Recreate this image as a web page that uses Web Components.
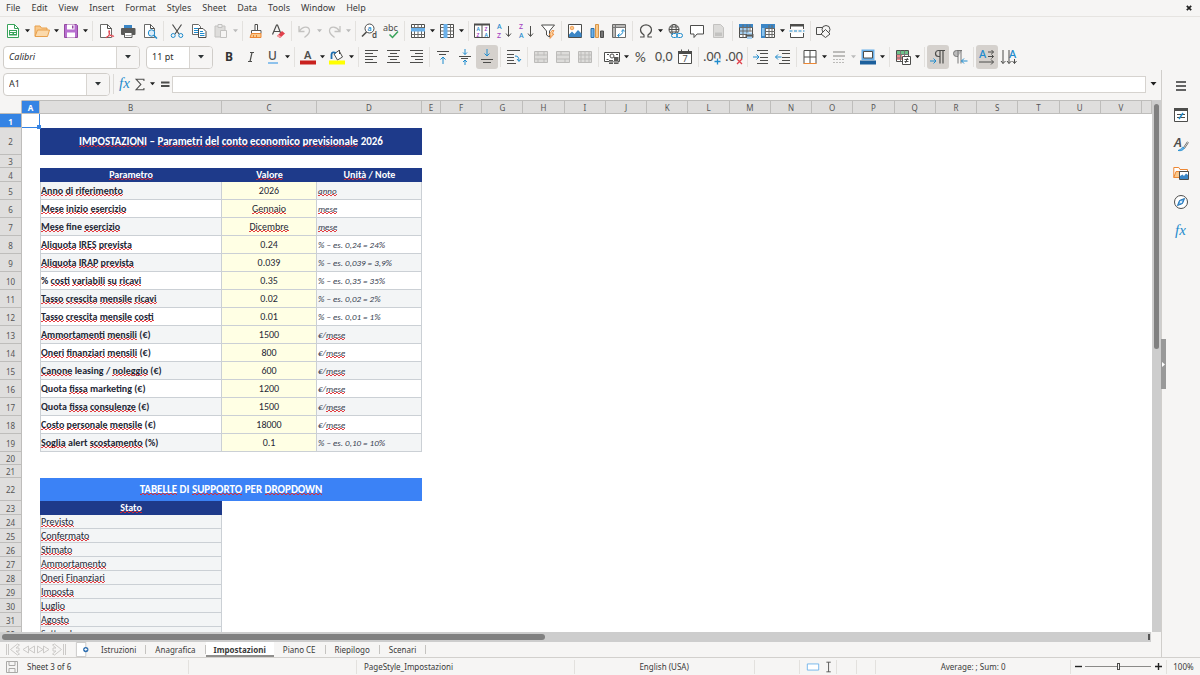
<!DOCTYPE html>
<html lang="en">
<head>
<meta charset="utf-8">
<title>Calc</title>
<style>
html,body{margin:0;height:100%}
body{font:9px/12px "Noto Sans",sans-serif;color:#3a3a3a;background:#f6f5f4;overflow:hidden}
</style>
</head>
<body>
<calc-window></calc-window>
<script>
const K='stroke="#4d4d4b" fill="none"', B='stroke="#1e8bcd" fill="none"', D='stroke="#c3c2c0" fill="none"';
const lines=(rows,c='#4d4d4b')=>rows.map(([x,y,w])=>`<path d="M${x} ${y}.5h${w}" stroke="${c}"/>`).join('');
const T=(x,y,s,t,c='#4d4d4b',x2='')=>`<text x="${x}" y="${y}" font-size="${s}" fill="${c}" ${x2}>${t}</text>`;
const table=(c,f='#fff')=>`<path d="M1.5 1.5h13v13h-13z" fill="${f}" stroke="${c}"/>`;
const merge=(v)=>`<path d="M1.5 2.5h13v11h-13z" fill="#dddcda" stroke="#bcbbb9"/><path d="M1.5 6h13M1.5 10h13M${v}" stroke="#bcbbb9" fill="none"/>`;
const ICONS={
new:`<path d="M2.5 1.5h7l4 4v9h-11z" fill="#fff" stroke="#38a35a"/><path d="M9.5 1.5v4h4" fill="none" stroke="#38a35a"/><path d="M4 7h8v5.5H4z" fill="#38a35a"/><path d="M5 8.5h6M5 10.5h2.5M9 10.5h2" stroke="#fff"/>`,
open:`<path d="M1 13V3h5l1.5 2H13v3" fill="#f9c98c" stroke="#e8a04c"/><path d="M1 13.5L3.5 7H15.5L13.5 13.5z" fill="#fbd9ab" stroke="#e8a04c"/>`,
save:`<path d="M1.5 1.5h12l1 1v12h-13z" fill="#b76fd0" stroke="#94499f"/><path d="M4 1.5h7.5v5H4z" fill="#fff"/><path d="M9 2.5h1.5v3H9z" fill="#94499f"/><path d="M4 9.5h8v5H4z" fill="#fff"/>`,
pdf:`<path d="M2.5 1.5h7l4 4v9h-11z" fill="#fff" stroke="#6a6a68"/><path d="M9.5 1.5v4h4" ${K}/><path d="M8 15c3-2 4-5 3.5-7-.5-1.5-1.5.5 0 3s3 3 4 2.5-1-1.800-4-.8-4 2-3.500 2.300z" fill="#fff" stroke="#e0404b"/>`,
print:`<path d="M4 2h8v4H4z" fill="#3b86c6"/><rect x="1" y="5" width="14.5" height="7" rx="1" fill="#5a5a58"/><path d="M4.5 9.5h7.5v5H4.5z" fill="#fff" stroke="#5a5a58"/><path d="M5.5 12.5h5.5" stroke="#aaa"/>`,
preview:`<path d="M2.5 1.5h6l4 4v9h-10z" fill="#fff" stroke="#6a6a68"/><path d="M8.5 1.5v4h4" ${K}/><circle cx="9.5" cy="10" r="3.2" fill="#dcecf8" stroke="#1e8bcd"/><path d="M12 12.5l3 3" stroke="#1e8bcd" stroke-width="1.5"/>`,
cut:`<path d="M3.5 1.5l6.5 9.5M12.5 1.5L6 11" ${K} stroke-width="1.2"/><circle cx="4.2" cy="12.5" r="2" ${B}/><circle cx="11.8" cy="12.5" r="2" ${B}/>`,
copy:`<path d="M1.5 1.5h6l2 2v8h-8z" fill="#fff" stroke="#6a6a68"/><path d="M3 5.5h5M3 7.5h5M3 9.5h4" ${B}/><path d="M7.5 5.5h4.5l3 3v6H7.5z" fill="#fff" stroke="#4d4d4b"/><path d="M9 8.5h3M9 10.5h4.5M9 12.5h4.5" ${B}/>`,
paste:`<path d="M2 3h10v11H2z" fill="#dedddb" stroke="#c3c2c0"/><path d="M5 1.5h4v3H5z" fill="#eee" stroke="#c3c2c0"/><path d="M7.5 7.5h6v7h-6z" fill="#f6f5f4" stroke="#c3c2c0"/>`,
clone:`<path d="M7 1.5h2.5v6H7z" fill="#fff" stroke="#4d4d4b"/><path d="M3.5 7.5h9.5v3H3.5z" fill="#fff" stroke="#5a5a58"/><path d="M3.5 10.5H13V14.5H2z" fill="#f9c98c" stroke="#ed8733"/><path d="M5.5 14v-2M8.5 14v-2" stroke="#ed8733"/>`,
clear:`<path d="M2.5 11.5L6.5 2h1l3.5 9M4 8.5h5.5" ${K} stroke-width="1.2"/><path d="M7 13l5-5 3 2.5-5 4.5z" fill="#e0404b"/><path d="M7 13l1.5-1.5 3 2.5L10 15z" fill="#f79aa0"/>`,
undo:`<path d="M2 3v5.5h5.5M2.5 8C6 3 12 3 12.5 7.5c.3 3-2.5 5-5 7" ${D} stroke-width="1.3"/>`,
redo:`<path d="M14 3v5.5H8.5M13.5 8C10 3 4 3 3.5 7.5c-.3 3 2.5 5 5 7" ${D} stroke-width="1.3"/>`,
find:`<circle cx="8.5" cy="5.5" r="4.5" fill="#fff" stroke="#4d4d4b"/><path d="M5.5 9L1 13.5" stroke="#4d4d4b" stroke-width="1.6"/>${T(6.5,8,7,'a','#1e8bcd','font-weight="600"')}${T(11,15,8,'d','#4d4d4b','font-weight="600"')}`,
spell:`${T(0,8,9,'abc','#4d4d4b')}<path d="M6.5 11.5l3 3L15 8.5" stroke="#38a35a" stroke-width="1.5" fill="none"/>`,
rowi:`${table('#4d4d4b')}<path d="M1.5 11.5h13M1.5 4.5h13M4.5 1.5v13M8 1.5v13M11.5 1.5v13" stroke="#6a6a68"/><path d="M1 5h14v3.5H1z" fill="#6bb1ea"/>`,
coli:`${table('#4d4d4b')}<path d="M1.5 11.5h13M1.5 4.5h13M1.5 8h13M11.5 1.5v13" stroke="#6a6a68"/><path d="M4.5 1h4v14h-4z" fill="#6bb1ea"/>`,
sort:`<path d="M.5 1.5h15v13H.5z" fill="#fff" stroke="#4d4d4b"/><path d="M0 .5h16v2H0zM7.5 2h1v13h-1z" fill="#4d4d4b"/>${T(2.5,8,5,'A','#1e8bcd','font-weight="600"')}${T(2.5,14,5,'Z','#a33fc0','font-weight="600"')}${T(10.5,8,5,'Z','#a33fc0','font-weight="600"')}${T(10.5,14,5,'A','#1e8bcd','font-weight="600"')}`,
asc:`${T(1,6,7,'A','#1e8bcd','font-weight="500"')}${T(1,15,7,'Z','#a33fc0','font-weight="500"')}<path d="M12.5 3v10M10 10.5l2.5 3 2.5-3" ${K}/>`,
desc:`${T(1,6,7,'Z','#a33fc0','font-weight="500"')}${T(1,15,7,'A','#1e8bcd','font-weight="500"')}<path d="M12.5 3v10M10 10.5l2.5 3 2.5-3" ${K}/>`,
filter:`<path d="M1.5 2h13L9.5 8v6L6.5 12V8z" fill="#fff" stroke="#4d4d4b"/><path d="M12 7.5l-3 4.5h2l-1 3.5 4-4.5h-2l2-3.5z" fill="#fbd9ab" stroke="#ed8733" stroke-width=".8"/>`,
image:`<path d="M1.5 1.5h13v13h-13z" fill="#fff" stroke="#4d4d4b"/><path d="M2 14v-2.5l3-3 2.5 2.5L11 7l3.5 3.5V14z" fill="#3b86c6"/><circle cx="5" cy="5" r="1.8" fill="#f9c98c" stroke="#ed8733" stroke-width=".7"/>`,
chart:`<path d="M2 5.5h3v9H2z" fill="#6bb1ea" stroke="#2b6fa8"/><path d="M6.5 1.5h3v13h-3z" fill="#f9c98c" stroke="#d99545"/><path d="M11.5 8h3v6.5h-3z" fill="#777" stroke="#4d4d4b"/>`,
pivot:`${table('#6a6a68')}<path d="M2 2h12v2.5H2zM2 2h2.5v12H2z" fill="#b9b8b6"/><path d="M1.5 4.5h13M4.5 1.5v13" stroke="#777"/><path d="M7 12.5c3 0 5-2 5-5M10.5 8.5l1.5-2 1.7 2M8.5 10.5l-2 2 2 1.8" ${B}/>`,
omega:`<path d="M2 14h4v-2C3.5 10.5 2.5 8.5 2.5 6.8 2.5 4 5 1.8 8 1.8s5.5 2.2 5.5 5C13.5 8.5 12.5 10.5 10 12v2h4" ${K} stroke-width="1.2"/>`,
link:`<circle cx="7" cy="6.5" r="5" ${K}/><ellipse cx="7" cy="6.5" rx="2.2" ry="5" ${K}/><path d="M2 6.5h10M3 4h8M3 9h8" ${K}/><path d="M6 10h9.5v4.5H6z" fill="#f6f5f4"/><rect x="4.5" y="10.5" width="6" height="4" rx="2" ${B}/><rect x="9.5" y="10.5" width="6" height="4" rx="2" ${B}/>`,
comment:`<path d="M1.5 2.5h13v8.5H8l-3 3.5V11H1.5z" fill="#fff" stroke="#4d4d4b"/>`,
header:`<path d="M2.5 1.5h7l3 3v10h-10z" fill="#dcdbd9" stroke="#c3c2c0"/><path d="M4 9.5h7v3.5H4z" fill="#c3c2c0"/>`,
parea:`${table('#4d4d4b')}<path d="M1 1h14v3.5H1z" fill="#3b86c6"/><path d="M2 5h9v6H2z" fill="#a5d0f2"/><path d="M1.5 4.5h13M1.5 8h13M1.5 11.5h8M5 1.5v13M9 1.5v9M12 1.5v7" stroke="#6a6a68"/><path d="M7.5 11h8v3.5h-8z" fill="#5a5a58"/><path d="M9 9.5h5v2H9zM9 13.5h5V16H9z" fill="#a5d0f2"/>`,
freeze:`${table('#4d4d4b')}<path d="M1 1h14v4H1zM1 1h4v14H1z" fill="#3b86c6"/><path d="M5.5 5v10M9 2v13M12 2v13M5 5.5h10M5 8.5h10M5 11.5h10" stroke="#6a6a68"/><path d="M2 5h2.5v8H2z" fill="#8cc4ee"/>`,
split:`<path d="M1.5 6V1.5h13V6M1.5 10v4.5h13V10" fill="#fff" stroke="#4d4d4b"/><path d="M1 1h14v2.5H1z" fill="#4d4d4b"/><path d="M.5 8h15" ${B} stroke-dasharray="3 1.5"/>`,
shapes:`<path d="M.5 4.5h7v7h-7z" ${K}/><circle cx="10" cy="6.5" r="4" fill="#f6f5f4" stroke="#4d4d4b"/><path d="M5 11l4.5-4.5L14 11l-4.5 3.5z" fill="#f6f5f4" stroke="#4d4d4b"/>`,
bold:T(4,12,12,'B','#333','font-weight="700"'),
italic:`<path d="M7 3.5h4M5 12.5h4M9 3.5l-2 9" ${K} stroke-width="1.2"/>`,
underline:`${T(3,11,12,'U','#4d4d4b','font-weight="500"')}<path d="M3 14h10" stroke="#6bb1ea" stroke-width="1.5"/>`,
fcolor:`${T(4,10,11,'A','#4d4d4b','font-weight="600"')}<path d="M0 11.5h16v4H0z" fill="#c9211e"/>`,
hcolor:`<path d="M0 11.5h16v4H0z" fill="#ff0"/><path d="M5 5l5-3.5L13.5 8 8.5 11z" fill="#fff" stroke="#4d4d4b"/><path d="M10.5 1v4" ${K}/><path d="M2.5 10V5.5C2.5 3 5 3 7 4" stroke="#1e6fb0" stroke-width="1.8" fill="none"/>`,
left:lines([[1,1,13],[1,4,8],[1,7,12],[1,10,8],[1,13,12]]),
center:lines([[1,1,13],[4,4,7],[2,7,11],[4,10,7],[1,13,13]]),
right:lines([[2,1,13],[7,4,8],[3,7,12],[7,10,8],[2,13,13]]),
top:lines([[2,2,12],[4,5,7]])+`<path d="M8 15V8M5.5 10.5L8 8l2.5 2.5" ${B}/>`,
middle:lines([[2,7,12],[4,9,7]])+`<path d="M8 0v5.5M6 3.5l2 2 2-2M8 16v-5M6 13l2-2 2 2" ${B}/>`,
bottom:lines([[2,10,12],[4,13,8]])+`<path d="M8 0v7M5.5 4.5L8 7l2.5-2.5" ${B}/>`,
wrap:lines([[1,1,13],[1,5,7],[1,8,7],[1,11,7],[1,14,9]])+`<path d="M9 7c3 0 4 1.5 4 5M11 10l2 2.5 2-2.5" ${B}/>`,
m1:merge('5 2.5v4M11 2.5v4M5 10v4M11 10v4'),m2:merge('6 2.5v3.5M10 10v4'),m3:merge('4 2.5v11M8 2.5v11M12 2.5v11'),
currency:`<path d="M.5 3.5h15v9H.5z" fill="#fff" stroke="#4d4d4b"/><path d="M3 5.5h2M2.5 10.5h2M12 5.5h2" ${K}/><circle cx="8" cy="7" r="2" ${K}/><path d="M5 11h4v4H5zM10 8h4.5v7H10z" fill="#5a5a58"/><path d="M5 13h9" stroke="#ccc"/>`,
percent:T(2,13,15,'%','#4d4d4b','font-family="Carlito"'),
number:T(0,12,14,'0,0','#4d4d4b','font-family="Carlito"'),
date:`<path d="M1.5 2.5h13v12h-13z" fill="#fff" stroke="#4d4d4b"/><path d="M1 2h14v3H1z" fill="#4d4d4b"/><path d="M4.5 .5v2M11.5 .5v2" ${K}/>${T(5.5,13,9,'7')}`,
adddec:`${T(-1,12,14,'.00','#4d4d4b','font-family="Carlito"')}<path d="M10 9.5h6v6h-6z" fill="#f6f5f4"/><path d="M10.5 12.5h6M13.5 9.5v6" ${B} stroke-width="1.3"/>`,
deldec:`${T(-1,12,14,'.00','#4d4d4b','font-family="Carlito"')}<path d="M10 10h6v6h-6z" fill="#f6f5f4"/><path d="M11 10l5 5M16 10l-5 5" stroke="#e0404b" stroke-width="1.3"/>`,
indent:lines([[4,1,11],[7,4,8],[7,8,8],[7,11,8],[4,14,11]])+`<path d="M0 8h5.5M3.5 5.5L6 8l-2.5 2.5" ${B}/>`,
outdent:lines([[4,1,11],[7,4,8],[7,8,8],[7,11,8],[4,14,11]])+`<path d="M.5 8h6M3 5.5L.5 8 3 10.5" ${B}/>`,
borders:`<path d="M2 14.5V1.5h12v13M8 1.5v13M2 8h12" fill="#fff" stroke="#4d4d4b"/><path d="M1.5 14.5h13" stroke="#ed8733"/>`,
bstyle:lines([[2,2,12],[2,3,12],[2,6,12],[2,7,12]],'#bcbbb9')+`<path d="M2 10.5h12M2 13.5h12" stroke="#bcbbb9" stroke-dasharray="2 1"/>`,
bcolor:`<path d="M2.5 1.5h11v8.5h-11z" fill="#fff" stroke="#6bb1ea" stroke-width="2"/><path d="M3.5 2.5h9v6.5h-9z" ${K}/><path d="M0 11.5h16v4H0z" fill="#1c5f9c"/>`,
cond:`<path d="M1.5 1.5h12v11h-12z" fill="#fff" stroke="#4d4d4b"/><path d="M2 2h11v3H2z" fill="#6fc28a"/><path d="M2 6h5v5H2z" fill="#f0888d"/><path d="M1.5 5.5h12M1.5 9h12M5.5 1.5v11M9.5 1.5v11" stroke="#777"/><path d="M7.5 7.5h8v8h-8z" fill="#fff" stroke="#4d4d4b"/><path d="M9.5 10.5h4M9.5 12.5h4M12.5 9l-2 5" ${K}/>`,
ltr:`<path d="M15 1.5H8.5a3 3 0 0 0 0 6h1.5M10 1.5v13M13 1.5v13" ${K} stroke-width="1.2"/><path d="M0 12h5.5M3.5 9.5L6 12l-2.5 2.5" ${B}/>`,
rtl:`<path d="M10 1.5H4.5a3 3 0 0 0 0 6H6M6 1.5v13M9 1.5v13" stroke="#777" fill="#bbb"/><path d="M15.5 12h-6M12 9.5L9.5 12l2.5 2.5" ${B}/>`,
hor:`${T(0,9,11,'A','#1e8bcd','font-weight="500"')}<path d="M9 3h5.5M12.5 1l2 2-2 2M9 7.5h5.5M12.5 5.5l2 2-2 2M0 13h14.5M12 10.5l2.5 2.5-2.5 2.5" ${K}/>`,
ver:`${T(8,9,11,'A','#1e8bcd','font-weight="500"')}<path d="M2 1v13.5M0 12l2 2.5L4.5 12M8 1v13.5M6 12l2 2.5 2.5-2.5M13.5 10v4.5M11.5 12l2 2.5 2-2.5" ${K}/>`,
fx:T(2,12,15,'<tspan font-style="italic">fx</tspan>','#1e8bcd','font-family="Liberation Serif"'),
sigma:`<path d="M12.5 4.5v-2h-9L9 8.5l-5.5 6h9v-2" ${K} stroke-width="1.2"/>`,
equal:`<path d="M4 6.5h8.5M4 10h8.5" ${K} stroke-width="1.8"/>`,
menu:`<path d="M3 4h10M3 8h10M3 12h10" stroke="#333" stroke-width="1.4"/>`,
props:`<path d="M1.5 1.5h13v13h-13z" fill="#fff" stroke="#4d4d4b"/><path d="M1 1h14v3H1z" fill="#4d4d4b"/><path d="M4 7.5h8M4 10.5h8" ${K}/><path d="M10 6l-4 6" ${B} stroke-width="1.4"/>`,
styles:`${T(1,11,13,'A','#4d4d4b','font-weight="600" font-style="italic"')}<path d="M15 6l-4 6" stroke="#4d4d4b" stroke-width="2"/><path d="M15 6l-4 6" stroke="#fff" stroke-width=".8"/><path d="M5 14.5c3 .5 5 0 6.5-2.5l-2-.8C8.5 13 7 13.5 5 14.5z" fill="#6bb1ea" stroke="#1e8bcd" stroke-width=".8"/>`,
gallery:`<path d="M.8 12.5V2.5h5l1.2 2h7.5v2" fill="#fff" stroke="#ed8733"/><path d="M.8 12.5L3 6.5h4v6z" fill="#fbc98c" stroke="#ed8733"/><path d="M6.5 6.5h9v8h-9z" fill="#fff" stroke="#4d4d4b"/><path d="M7 14v-3l2.5-1.5L11 11l2-2.5 2 1.5v4z" fill="#3b86c6"/>`,
nav:`<circle cx="8" cy="8" r="6.5" fill="#fff" stroke="#4d4d4b"/><path d="M11.5 4.5L9.5 9.5 4.5 11.5 6.5 6.5z" fill="#6bb1ea" stroke="#1e6fb0"/><circle cx="8" cy="8" r="1" fill="#fff"/>`,
save2:`<path d="M2.5 2.5h11v11h-11z" fill="#f6f5f4" stroke="#aaa9a7"/><path d="M5 2.5v4h6v-4M5 13.5V9.5h6v4" fill="none" stroke="#aaa9a7"/>`,
sel:`<path d="M1.5 4.5h13v7h-13z" fill="#fff" stroke="#6bb1ea"/>`,
caret:`<path d="M5 2.5h5M7.5 2.5v11M5 13.5h5" ${K}/>`,
addsheet:`<path d="M1.5 .5h10v15h-10z" fill="#fff" stroke="#c9c8c6"/><circle cx="11.5" cy="8" r="2.8" fill="#2f6fb0"/><path d="M10 8h3M11.5 6.5v3" stroke="#fff"/>`
};
const svg=(n,s=16)=>`<svg viewBox="0 0 16 16" width="${s}" height="${s}" overflow="visible" aria-hidden="true" font-family="Noto Sans">${ICONS[n]}</svg>`;
const arrow=(w=6,c='#1f1f1f')=>`<svg width="${w}" height="4" viewBox="0 0 6 4" aria-hidden="true"><path d="M0 0h6L3 3.5z" fill="${c}"/></svg>`;
const RESET=`:host,*{box-sizing:border-box}button,input{font:inherit;color:inherit;border:0;padding:0;margin:0;background:none;outline:0}button{display:flex;align-items:center;justify-content:center}svg{display:block;flex:none}`;
const define=(name,html)=>customElements.define(name,class extends HTMLElement{
  connectedCallback(){
    if(this.shadowRoot)return;
    const t=document.createElement('template');
    t.innerHTML=typeof html==='function'?html(this):html;
    this.attachShadow({mode:'open'}).append(t.content.cloneNode(true));
  }
});

define('tool-button',el=>`<style>${RESET}
:host{display:flex;flex:none}
.i{width:22px;height:24px;border-radius:3px}
.i[aria-pressed=true]{background:#d5d1cd}
.d{width:7px;height:24px}
</style><button class="i" aria-label="${el.getAttribute('icon')}" aria-pressed="${el.hasAttribute('on')}">${svg(el.getAttribute('icon'))}</button>${el.hasAttribute('drop')?`<button class="d" aria-label="more">${arrow(5,el.getAttribute('drop')||'#1f1f1f')}</button>`:''}`);

define('tool-separator',`<style>:host{display:block;flex:none;width:1px;height:20px;margin:0 2px;background:#e3e1de}:host([wide]){margin-left:3px}</style>`);

define('combo-box',el=>`<style>${RESET}
:host{display:flex;flex:none;height:23px;border:1px solid #d0cdc9;border-radius:4px;background:#fff;overflow:hidden}
input{flex:1;min-width:0;padding:0 0 0 5px;color:#2e2e2e}
button{width:23px;border-left:1px solid #d8d5d1;background:#f6f5f4}
</style><input value="${el.getAttribute('value')}" aria-label="${el.getAttribute('label')}"><button aria-label="open list">${arrow(8,'#2e3436')}</button>`);

define('menu-bar',`<style>${RESET}
:host{display:flex;align-items:center;height:17px;padding:0 5px 0 0;border-bottom:1px solid #e6e4e1}
nav{display:flex;flex:1}
nav button{padding:0 5px 0 6px}
.x{width:12px;height:12px}
</style><nav>${['File','Edit','View','Insert','Format','Styles','Sheet','Data','Tools','Window','Help'].map(m=>`<button>${m}</button>`).join('')}</nav>
<button class="x" aria-label="close"><svg width="6" height="6" viewBox="0 0 6 6"><path d="M.8.8l4.4 4.4M5.2.8L.8 5.2" stroke="#222" stroke-width="1.7"/></svg></button>`);

define('tool-bar',`<style>:host{display:flex;align-items:center;height:27px;padding-left:2px}:host([format]){height:26px}</style><slot></slot>`);

define('formula-bar',`<style>${RESET}
:host{display:flex;align-items:center;height:28px;padding-left:3px}
combo-box{width:107px}
i{width:1px;height:20px;background:#dcdad7;margin:0 3px}
.t{width:15px;height:20px}.s{width:10px;height:20px}
.in{flex:1;min-width:0;height:17px;border:1px solid #d6d3cf;background:#fff;padding:0 4px}
.o{width:15px;height:16px}
</style><combo-box value="A1" label="Name Box"></combo-box><i></i>
<button class="t" aria-label="fx">${svg('fx')}</button><button class="t" aria-label="sum">${svg('sigma',14)}</button><button class="s" aria-label="functions">${arrow(5)}</button><button class="t" aria-label="formula">${svg('equal')}</button>
<input class="in" aria-label="Input line"><button class="o" aria-label="expand">${arrow(7)}</button>`);

const mark=s=>s.replace(/_([^_]+)_/g,'<span>$1</span>');
const PARAMS=[['_Anno_ _di_ _riferimento_','2026','_anno_'],['_Mese_ _inizio_ _esercizio_','_Gennaio_','_mese_'],['_Mese_ fine _esercizio_','_Dicembre_','_mese_'],
['_Aliquota_ _IRES_ _prevista_','0.24','% – es. 0,24 = 24%'],['_Aliquota_ _IRAP_ _prevista_','0.039','% – es. 0,039 = 3,9%'],['% _costi_ _variabili_ _su_ _ricavi_','0.35','% – es. 0,35 = 35%'],
['_Tasso_ _crescita_ _mensile_ _ricavi_','0.02','% – es. 0,02 = 2%'],['_Tasso_ _crescita_ _mensile_ _costi_','0.01','% – es. 0,01 = 1%'],['_Ammortamenti_ _mensili_ (€)','1500','€/_mese_'],
['_Oneri_ _finanziari_ _mensili_ (€)','800','€/_mese_'],['_Canone_ leasing / _noleggio_ (€)','600','€/_mese_'],['Quota _fissa_ marketing (€)','1200','€/_mese_'],
['Quota _fissa_ _consulenze_ (€)','1500','€/_mese_'],['_Costo_ _personale_ _mensile_ (€)','18000','€/_mese_'],['_Soglia_ alert _scostamento_ (%)','0.1','% – es. 0,10 = 10%']];
const STATES=['Previsto','Confermato','Stimato','Ammortamento','_Oneri_ _Finanziari_','Imposta','Luglio','Agosto','Settembre'];
const rest='<td colspan="19"></td>';
const row=(n,cls,cells)=>`<tr class="${cls}"><th scope="row">${n}</th>${n===1?'<td class="cur"></td>':'<td></td>'}${cells}</tr>`;
define('sheet-grid',()=>`<style>
:host{display:block;flex:1;min-width:0;overflow:hidden;background:#fff}
table{width:100%;table-layout:fixed;border-spacing:0;font:10px/12px Carlito,Lato,sans-serif;color:#1f2937}
td,th{padding:0;box-sizing:border-box;white-space:nowrap;overflow:hidden}
thead th,tbody th{font:8px/12px "Noto Sans",sans-serif;color:#555;background:#dfdedd;border-right:1px solid #bebdbb;border-bottom:1px solid #bebdbb}
tbody th{padding-top:1px;line-height:11px}
thead th{height:14px;border-top:1px solid #bebdbb;line-height:11px}
thead th:first-child{background:#f6f5f4;border-color:#f6f5f4 #bebdbb #bebdbb #f6f5f4}
thead th.on,tr.r1 th{background:#3584e4;color:#fff;font-weight:700}
tr{height:14px}.r2{height:27px}.r3,.r20{height:13px}.p{height:18px}.r22{height:23px}
.r2 .h{background:#1e3a8a;color:#fff;font-weight:700;font-size:11px;text-align:center}
.r22 .h{background:#3b82f6;color:#fff;font-weight:700;font-size:11px;text-align:center}
.hd{background:#1e3a8a;color:#fff;font-weight:700;text-align:center}
.b,.c,.d{border-right:1px solid #cbd0d5;border-bottom:1px solid #cbd0d5}
.b{border-left:1px solid #cbd0d5;background:#f3f5f6}
.d{background:#f3f5f6;font-style:italic;padding-left:1px;color:#374151;font-size:9px}
.p .b{font-weight:700}
.p.w .b,.p.w .d{background:#fff}
.c{background:#ffffe4;text-align:center}
.cur{position:relative;overflow:visible;border:1px solid #3584e4;border-width:0 1px 1px 0}
.cur::after{content:"";position:absolute;right:-2px;bottom:-2px;width:4px;height:4px;background:#3584e4}
span{position:relative}
span::after{content:"";position:absolute;left:0;right:0;bottom:0;height:3px;background:url("data:image/svg+xml,%3Csvg xmlns='http://www.w3.org/2000/svg' width='4' height='3'%3E%3Cpath d='M-1 0L1 2 3 0 5 2' fill='none' stroke='%23e0282e' stroke-width='.9'/%3E%3C/svg%3E") repeat-x}
.d span::after{bottom:-1px}
</style><table><colgroup><col style="width:22px"><col style="width:18px"><col style="width:182px"><col style="width:95px"><col style="width:105px"><col style="width:19px">${'<col>'.repeat(17)}<col style="width:10px"></colgroup>
<thead><tr><th></th>${[...'ABCDEFGHIJKLMNOPQRSTUV'].map(c=>`<th scope="col"${c==='A'?' class="on"':''}>${c}</th>`).join('')}<th></th></tr></thead>
<tbody>${row(1,'r1','<td colspan="3"></td>'+rest)}
${row(2,'r2',`<td class="h" colspan="3">${mark('_IMPOSTAZIONI_ – _Parametri_ _del_ _conto_ _economico_ _previsionale_ 2026')}</td>`+rest)}
${row(3,'r3','<td colspan="3"></td>'+rest)}
${row(4,'r4',mark('<td class="hd">_Parametro_</td><td class="hd">_Valore_</td><td class="hd">_Unità_ / Note</td>')+rest)}
${PARAMS.map((p,i)=>row(i+5,'p'+(i%2?' w':''),`<td class="b">${mark(p[0])}</td><td class="c">${mark(p[1])}</td><td class="d">${mark(p[2])}</td>`+rest)).join('')}
${row(20,'r20','<td colspan="3"></td>'+rest)}${row(21,'r20','<td colspan="3"></td>'+rest)}
${row(22,'r22',`<td class="h" colspan="3">${mark('_TABELLE_ DI _SUPPORTO_ PER _DROPDOWN_')}</td>`+rest)}
${row(23,'',`<td class="hd">${mark('_Stato_')}</td><td colspan="2"></td>`+rest)}
${STATES.map((s,i)=>row(i+24,'',`<td class="b">${mark(s[0]==='_'?s:`_${s}_`)}</td><td colspan="2"></td>`+rest)).join('')}
</tbody></table>`);

define('scroll-bar',`<style>
:host{display:flex;flex:none;box-sizing:border-box;background:#cdcdcd}
:host([vertical]){width:9px;flex-direction:column;padding:4px 2px 0}
:host([horizontal]){height:10px;padding:2px 0 2px 2px;margin-right:10px}
b{background:#808080;border-radius:3px}
:host([vertical]) b{flex:13}:host([vertical]) i{flex:15}
:host([horizontal]) b{flex:9}:host([horizontal]) i{flex:10;border-right:2px solid #555;margin-right:1px}
</style><b></b><i></i>`);

define('sheet-tabs',`<style>${RESET}
:host{display:flex;height:15px;font-size:8px;align-items:stretch}
.n{width:15px;color:#cccac8}
.first{margin-left:6px}
.add{width:16px;margin:0 2px 0 8px}
.tab{padding:0 10px 0 9px;position:relative}
.tab::after{content:"";position:absolute;right:0;top:3px;width:1px;height:9px;background:#c5c3c0}
.tab.on{background:#fff;font-weight:700;border-bottom:2px solid #8f8e8c;padding:2px 8px 0}
.tab.on::after{display:none}
</style>
${['M.5 2v11M2.5 2v11M13.500 3l-2-1L4.500 7.500l7 5.500 2-1-3.500-3h3V6h-3z','M7.500 4L2 7.500 7.500 11zM13.500 4L8 7.500l5.500 3.500z','M1.500 4L7 7.500 1.500 11zM7.500 4L13 7.500 7.500 11z','M14.500 2v11M12.500 2v11M1.500 3l2-1 7 5.500-7 5.500-2-1 3.500-3h-3V6h3z'].map((d,i)=>`<button class="n${i?'':' first'}" aria-label="${['first','previous','next','last'][i]}"><svg width="15" height="15" viewBox="0 0 15 15"><path d="${d}" fill="none" stroke="currentColor"/></svg></button>`).join('')}
<button class="add" aria-label="add">${svg('addsheet',15)}</button>
${['Istruzioni','Anagrafica','Impostazioni','Piano CE','Riepilogo','Scenari'].map(t=>`<button class="tab${t==='Impostazioni'?' on':''}">${t}</button>`).join('')}`);

define('side-bar',`<style>${RESET}
:host{display:flex;flex-direction:column;align-items:center;width:38px;flex:none;gap:5px;padding-top:4px;position:relative}
button{width:24px;height:24px}
.h{position:absolute;left:-1px;top:269px;width:5px;height:50px;background:#999}
</style><button class="h" aria-label="hide"><svg width="3" height="5" viewBox="0 0 3 5"><path d="M0 0l3 2.5L0 5z" fill="#fff"/></svg></button>
${['menu','props','styles','gallery','nav','fx'].map(i=>`<button aria-label="${i}">${svg(i)}</button>`).join('')}`);

define('status-bar',`<style>${RESET}
:host{display:grid;grid-template-columns:190fr 169fr 219fr 181fr 46fr 31fr 20fr 19fr 196fr 96px 33px;align-items:center;height:18px;font-size:8px;border-top:1px solid #d2d0cd}
div{height:14px;border-right:1px solid #e3e1de;display:flex;align-items:center;justify-content:center;white-space:nowrap}
div:last-child{border:0}
.l{justify-content:flex-start;padding-left:7px}
.s{padding-left:4px;gap:7px}
.e{gap:2px;padding-left:6px}
.z{gap:2px}.z button{width:10px;height:12px}
input{-webkit-appearance:none;appearance:none;width:66px;height:10px}
input::-webkit-slider-runnable-track{height:1px;background:#8b8a88}
input::-webkit-slider-thumb{-webkit-appearance:none;width:3px;height:7px;margin-top:-3px;border:1px solid #4d4d4b;background:#f6f5f4}
</style><div class="l s">${svg('save2')}Sheet 3 of 6</div><div></div><div class="l">PageStyle_Impostazioni</div><div>English (USA)</div><div></div>
<div class="e">${svg('sel',14)}${svg('caret',14)}</div><div></div><div></div><div>Average: ; Sum: 0</div>
<div class="z"><button aria-label="zoom out"><svg width="7" height="7"><path d="M0 3.5h7" stroke="#222" stroke-width="1.4"/></svg></button><input type="range" aria-label="Zoom" min="0" max="100" value="50"><button aria-label="zoom in"><svg width="7" height="7"><path d="M0 3.5h7M3.5 0v7" stroke="#222" stroke-width="1.4"/></svg></button></div><div>100%</div>`);

const bar=s=>s.trim().split(/\s+/).map((t,i,a)=>{
  if(t==='|')return `<tool-separator${/[+~]$/.test(a[i-1])?' wide':''}></tool-separator>`;
  const n=t.replace(/[+~*]/g,'');
  return `<tool-button icon="${n}"${t.endsWith('+')?' drop':t.endsWith('~')?' drop="#bbb"':''}${t.endsWith('*')?' on':''}></tool-button>`;
}).join('');
define('calc-window',`<style>
:host{display:flex;flex-direction:column;height:100vh}
.mid{flex:1;min-height:0;display:flex}
.main{flex:1;min-width:0;display:flex;flex-direction:column;border-right:1px solid #d0cecb}
.sheet{flex:1;min-height:0;display:flex;margin-top:2px}
.font{width:137px;margin:0 6px 0 1px;font-style:italic}
.size{width:67px;margin-right:5px}
</style>
<menu-bar></menu-bar>
<tool-bar>${bar('new+ open+ save+ | pdf print preview | cut copy paste~ | clone clear | undo~ redo~ | find spell | rowi+ coli+ | sort asc desc filter | image chart pivot | omega+ link comment header | parea freeze+ split | shapes')}</tool-bar>
<tool-bar format><combo-box class="font" value="Calibri" label="Font Name"></combo-box><combo-box class="size" value="11 pt" label="Font Size"></combo-box>${bar('bold italic underline+ | fcolor+ hcolor+ | left center right | top middle bottom* | wrap | m1 m2 m3 | currency+ percent number date | adddec deldec | indent outdent | borders+ bstyle~ bcolor+ | cond+ | ltr* rtl | hor* ver')}</tool-bar>
<div class="mid"><div class="main"><formula-bar></formula-bar><div class="sheet"><sheet-grid></sheet-grid><scroll-bar vertical></scroll-bar></div><scroll-bar horizontal></scroll-bar><sheet-tabs></sheet-tabs></div><side-bar></side-bar></div>
<status-bar></status-bar>`);
</script>
</body>
</html>
